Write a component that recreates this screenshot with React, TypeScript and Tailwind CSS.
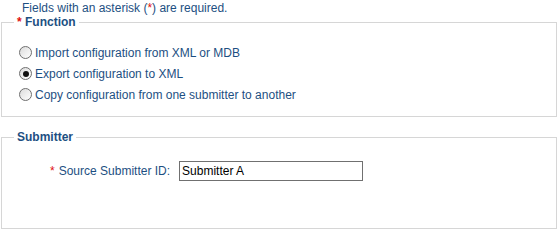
const options = [
  { label: "Import configuration from XML or MDB", checked: false },
  { label: "Export configuration to XML", checked: true },
  { label: "Copy configuration from one submitter to another", checked: false },
];

const Radio = ({ checked }: { checked: boolean }) => (
  <span className="flex h-[13px] w-[13px] shrink-0 items-center justify-center rounded-full border border-[#6f6f6f] bg-gradient-to-br from-[#dcdcdc] to-white">
    {checked && <span className="h-[6px] w-[6px] rounded-full bg-[#111]" />}
  </span>
);

const Req = () => <span className="text-[#e01010]">*</span>;

export default function App() {
  return (
    <div className="min-h-screen w-[559px] bg-white pl-[1px] font-['Liberation_Sans',Arial,sans-serif] text-[12px] leading-[14px] text-[#1d4f82]">
      <div className="pl-[21px] pt-[1px]">
        Fields with an asterisk (<Req />) are required.
      </div>

      <fieldset className="w-[556px] border border-[#d6d6d6] pb-[11px] pl-[12px]">
        <legend className="px-[3px] font-bold">
          <Req /> Function
        </legend>
        <div className="flex flex-col pl-[5px] pt-[13px]">
          {options.map((o) => (
            <label key={o.label} className="flex h-[21px] items-center gap-[3px]">
              <Radio checked={o.checked} />
              <span>{o.label}</span>
            </label>
          ))}
        </div>
      </fieldset>

      <fieldset className="mt-[13px] h-[99px] w-[556px] border border-[#d6d6d6] pl-[12px]">
        <legend className="px-[3px] font-bold">Submitter</legend>
        <div className="flex items-center pl-[36px] pt-[17px]">
          <span className="mr-[4px]">
            <Req />
          </span>
          <span>Source Submitter ID:</span>
          <div className="ml-[9px] flex h-[20px] w-[184px] items-center border border-[#707070] pl-[2px] text-black">
            Submitter A
          </div>
        </div>
      </fieldset>
    </div>
  );
}
